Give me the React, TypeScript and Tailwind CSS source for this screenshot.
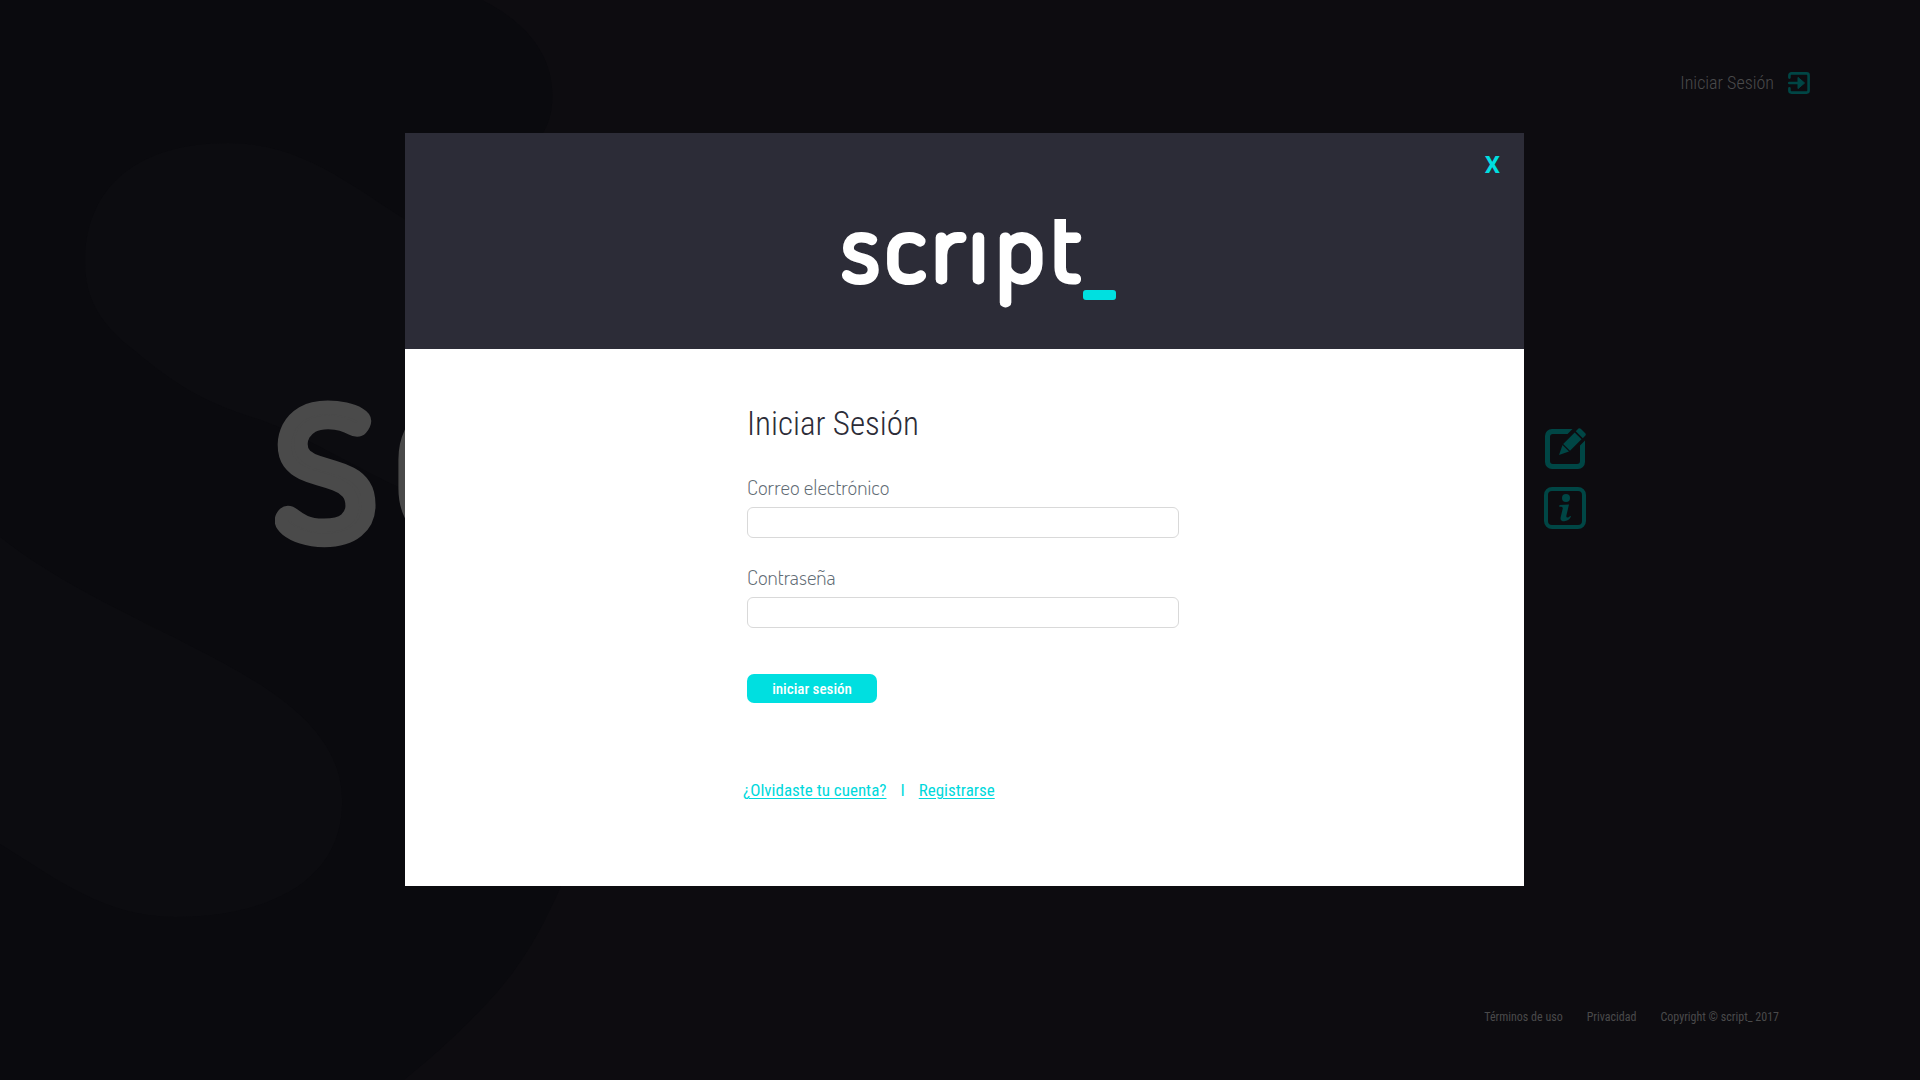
const condensed = 'font-["Roboto_Condensed",Roboto,sans-serif]';

function Logo({ className, color, bar }: { className: string; color: string; bar: string }) {
  return (
    <svg viewBox="0 0 274 92" className={className} role="img" aria-label="script_">
      <text
        x="-1 43 90 127 154 209"
        y="63"
        fontSize="100"
        className={'font-["Dosis",sans-serif] font-normal'}
        fill={color}
        stroke={color}
        strokeWidth="5"
        strokeLinejoin="round"
      >
        scrıpt
      </text>
      <rect x="241" y="71" width="33" height="10" rx="3" fill={bar} />
    </svg>
  );
}

function Backdrop() {
  return (
    <svg
      viewBox="0 0 640 1080"
      className="absolute top-0 left-0 h-[1080px] w-[640px]"
      aria-hidden="true"
    >
      <path
        d="M0 0H482C530 24 556 60 552 104C551 116 548 126 540 138L600 400V780L561 886C542 930 520 968 490 1000C462 1030 436 1054 404 1080H0Z"
        fill="#0a0a0e"
      />
      <path
        d="M85 262C85 190 134 143 228 143C312 143 360 196 440 240V505C370 478 316 440 261 420C200 402 170 380 135 351C102 326 85 300 85 262Z"
        fill="#0c0c10"
      />
      <path
        d="M0 537C80 600 180 634 261 685C318 722 344 760 342 806C340 880 270 917 175 917C106 917 58 880 0 844Z"
        fill="#0c0c10"
      />
    </svg>
  );
}

function EnterIcon() {
  return (
    <svg viewBox="0 0 22 22" className="size-[22px]" aria-hidden="true">
      <path
        d="M1.4 5.6V3.4a2 2 0 0 1 2-2h15.200a2 2 0 0 1 2 2v15.200a2 2 0 0 1-2 2H3.400a2 2 0 0 1-2-2v-2.200M1.200 11H11"
        fill="none"
        stroke="#004645"
        strokeWidth="2.600"
        strokeLinecap="round"
      />
      <path d="M10 5.400L16.600 11L10 16.600Z" fill="#004645" stroke="#004645" strokeLinejoin="round" />
    </svg>
  );
}

function EditIcon() {
  return (
    <svg viewBox="0 0 42 42" className="size-[42px]" aria-hidden="true">
      <path
        d="M28.500 2H8a7 7 0 0 0-7 7v26a7 7 0 0 0 7 7h26a7 7 0 0 0 7-7V13.500L36 18.500V34a3 3 0 0 1-3 3H9a3 3 0 0 1-3-3V10a3 3 0 0 1 3-3H23.500Z"
        fill="#004645"
      />
      <path d="M15 28L18.500 18L25 24.500Z" fill="#004645" />
      <path d="M19.200 17L30.700 5.500L37.500 12.300L26 23.800Z" fill="#004645" />
      <path d="M31.800 4.200L34.400 1.600Q35.500 .7 36.700 1.700L41.300 6.300Q42.300 7.500 41.400 8.600L38.800 11.200Z" fill="#004645" />
    </svg>
  );
}

function InfoIcon() {
  return (
    <svg viewBox="0 0 42 42" className="size-[42px]" aria-hidden="true">
      <rect x="2" y="2" width="38" height="38" rx="6" fill="none" stroke="#004645" strokeWidth="4" />
      <circle cx="22" cy="11" r="4" fill="#004645" />
      <path
        d="M15.500 18L25 17.500L22.400 28.500q-.4 2 1 2q1.400 0 2.700-1.500l1 .6q-2.500 4.600-6.900 4.600q-4.500 0-3.500-4.200l2-8.200q.4-2-1.500-2.100h-2Z"
        fill="#004645"
      />
    </svg>
  );
}

function LandingPage() {
  return (
    <div className="relative flex min-h-screen flex-col text-[#4a4a4b]">
      <header className="flex justify-end pt-[72px] pr-[110px]">
        <a href="#login" className="flex h-[22px] items-center gap-[14px] text-lg font-light">
          Iniciar Sesión
          <EnterIcon />
        </a>
      </header>
      <div className="mt-[272px] flex items-start pr-[334px] pl-[275px]">
        <Logo className="w-[750px]" color="#4a4a4a" bar="#004645" />
        <nav className="mt-[61px] ml-auto flex flex-col gap-[18px]">
          <a href="#write" aria-label="Escribir">
            <EditIcon />
          </a>
          <a href="#info" aria-label="Información">
            <InfoIcon />
          </a>
        </nav>
      </div>
      <footer className="mt-auto flex justify-end gap-6 pr-[141px] pb-[53px] text-xs leading-5">
        <a href="#terms">Términos de uso</a>
        <a href="#privacy">Privacidad</a>
        <span>Copyright © script_ 2017</span>
      </footer>
    </div>
  );
}

function Field({ id, label, type, className }: { id: string; label: string; type: string; className: string }) {
  return (
    <div className={className}>
      <label htmlFor={id} className={'block font-["Dosis",sans-serif] text-[21px] leading-6 font-light text-[#5f6b74]'}>
        {label}
      </label>
      <input
        id={id}
        type={type}
        className="mt-2 block h-[31px] w-full rounded-md border border-[#d9d9d9] bg-white px-2 outline-none focus:border-[#00e0e0]"
      />
    </div>
  );
}

function LoginDialog() {
  return (
    <section
      role="dialog"
      aria-labelledby="login-title"
      className="w-full max-w-[1119px] bg-white text-[#2c2c37]"
    >
      <div className="relative flex justify-center bg-[#2c2c37] pt-[86px] pb-[38px] pl-[29px]">
        <Logo className="w-[274px]" color="#ffffff" bar="#00e0e0" />
        <button
          type="button"
          aria-label="Cerrar"
          className="absolute top-5 right-6 font-[Roboto,sans-serif] text-2xl leading-6 font-bold text-[#00dfe0]"
        >
          X
        </button>
      </div>
      <form className="pt-[55px] pb-[84px] pl-[342px]">
        <h1 id="login-title" className="text-[33px] leading-10 font-light">
          Iniciar Sesión
        </h1>
        <Field id="email" label="Correo electrónico" type="email" className="mt-[31px] max-w-[432px]" />
        <Field id="password" label="Contraseña" type="password" className="mt-[27px] max-w-[432px]" />
        <button
          type="submit"
          className="mt-[46px] block h-[29px] w-[130px] rounded-[7px] bg-[#00dfe0] text-[15px] leading-5 font-medium text-white"
        >
          iniciar sesión
        </button>
        <div className="mt-[75px] -ml-1 flex gap-[14px] text-[17px] leading-6 text-[#00d8dc]">
          <a href="#recover" className="underline decoration-1 underline-offset-2">
            ¿Olvidaste tu cuenta?
          </a>
          <span>I</span>
          <a href="#signup" className="underline decoration-1 underline-offset-2">
            Registrarse
          </a>
        </div>
      </form>
    </section>
  );
}

export default function App() {
  return (
    <main className={`relative min-h-screen overflow-hidden bg-[#0d0c10] ${condensed}`}>
      <Backdrop />
      <LandingPage />
      <div className="absolute inset-0 flex items-start justify-center pt-[133px] pl-[9px]">
        <LoginDialog />
      </div>
    </main>
  );
}
